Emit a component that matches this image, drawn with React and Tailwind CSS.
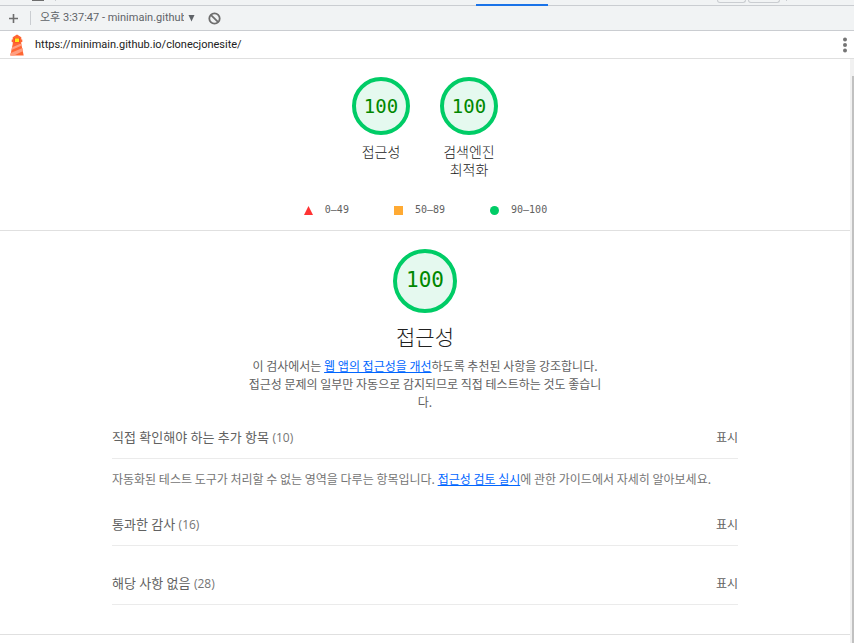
import React from "react";

function Gauge({ score, size, className }) {
  return (
    <div className={`${size} flex items-center justify-center rounded-full border-4 border-[#00cc66] bg-[#e5f9ef] font-['DejaVu_Sans_Mono',monospace] text-[#008800] ${className}`}>
      {score}
    </div>
  );
}

function SummaryGauge({ label }) {
  return (
    <a href="#category" className="flex w-[88px] flex-col items-center gap-2 px-4">
      <Gauge score={100} size="size-[58px] shrink-0" className="text-[19px]" />
      <span className="break-keep text-center text-[14px] font-light leading-[18px] text-[#212121]">{label}</span>
    </a>
  );
}

function Clump({ title, count, children }) {
  return (
    <section>
      <button type="button" className="flex h-[42px] w-full items-center justify-between border-b border-[#ebebeb] text-[#616161]">
        <span className="text-[13px]">
          {title} <span className="text-[12px] text-[#757575]">({count})</span>
        </span>
        <span className="text-[12px]">표시</span>
      </button>
      {children}
    </section>
  );
}

function Lighthouse() {
  return (
    <svg viewBox="0 0 16 22" className="h-[22px] w-4" aria-hidden="true">
      <path d="M8 0.5l4.3 2.8V5.5h1v2.6h-1v2l2.4 11.4H1.3L3.7 10V8.1H2.7V5.5h1V3.3z" fill="#ff6633" />
      <path d="M3.2 13.2l7.6-3.2h1.5l.5 1.5L2.6 16zM1.7 19l11.8-5 .7 3L5 21.5H1.3z" fill="#ff9e80" />
      <path d="M5.2 4h5.6v4.5H5.2z" fill="#f4511e" />
      <path d="M6 4.5h4V8H6z" fill="#ffe81a" />
    </svg>
  );
}

export default function App() {
  return (
    <div className="flex min-h-screen flex-col bg-white font-['Open_Sans','Noto_Sans_CJK_KR',sans-serif]">
      <div className="flex h-1.5 border-b border-[#cacdd1] bg-[#f1f3f4]">
        <div className="flex flex-1 items-start">
          <span className="ml-8 h-px w-3 bg-[#6e6e6e]" />
          <span className="ml-[11px] h-px w-px bg-[#cacdd1]" />
        </div>
        <div className="h-1.5 w-[72px] border-b-2 border-[#1a73e8]" />
        <div className="flex w-[306px] items-start justify-end gap-0.5 pr-[67px]">
          <span className="h-[3px] w-[29px] rounded-b-sm border border-t-0 border-[#cacdd1]" />
          <span className="h-[3px] w-8 rounded-b-sm border border-t-0 border-[#cacdd1]" />
          <span className="ml-1 h-px w-px bg-[#cacdd1]" />
        </div>
      </div>

      <div className="flex h-[25px] items-center border-b border-[#cacdd1] bg-[#f1f3f4] text-[#5f6368]">
        <button type="button" aria-label="새 보고서" className="flex w-[30px] pl-2">
          <svg viewBox="0 0 11 11" className="size-[11px]" fill="none" stroke="#6e6e6e" strokeWidth="1.6">
            <path d="M5.5 1v9M1 5.5h9" />
          </svg>
        </button>
        <span className="h-3.5 w-px bg-[#cacdd1]" />
        <div className="flex items-center gap-1 pl-2">
          <select aria-label="보고서" className="w-[145px] appearance-none overflow-hidden bg-transparent pl-px font-['Roboto','Noto_Sans_CJK_KR',sans-serif] text-[11px] leading-4">
            <option>오후 3:37:47 - minimain.github.io</option>
          </select>
          <svg viewBox="0 0 7 7" className="h-[7px] w-[7px]" fill="#5f6368" aria-hidden="true">
            <path d="M0.5 0h6L3.5 6.5z" />
          </svg>
        </div>
        <button type="button" aria-label="모두 지우기" className="ml-[13px]">
          <svg viewBox="0 0 13 13" className="size-[13px]" fill="none" stroke="#6e6e6e" strokeWidth="1.8">
            <circle cx="6.5" cy="6.5" r="5.2" />
            <path d="M2.8 2.8l7.4 7.4" />
          </svg>
        </button>
      </div>

      <header className="flex h-7 items-center border-b border-[#dfdfdf] pl-[9px] pr-1 text-[#212121]">
        <Lighthouse />
        <a href="https://minimain.github.io/clonecjonesite/" className="ml-2.5 font-['Roboto',sans-serif] text-[11px] leading-4">
          https://minimain.github.io/clonecjonesite/
        </a>
        <button type="button" aria-label="도구 메뉴" className="ml-auto">
          <svg viewBox="0 0 10 16" className="h-4 w-2.5" fill="#757575">
            <circle cx="5" cy="2.5" r="2" />
            <circle cx="5" cy="8" r="2" />
            <circle cx="5" cy="13.5" r="2" />
          </svg>
        </button>
      </header>

      <div className="flex flex-1">
        <main className="min-w-0 flex-1">
          <div className="border-b border-[#e0e0e0] pb-3 pt-[18px]">
            <div className="flex justify-center">
              <SummaryGauge label="접근성" />
              <SummaryGauge label="검색엔진 최적화" />
            </div>
            <div className="mt-[23px] flex items-center justify-center gap-[45px] pl-px font-['DejaVu_Sans_Mono',monospace] text-[10px] leading-4 text-[#616161]">
              <span className="flex items-center gap-3">
                <svg viewBox="0 0 9 9" className="size-[9px]" fill="#ff3333" aria-hidden="true"><path d="M4.5 0L9 9H0z" /></svg>
                0–49
              </span>
              <span className="flex items-center gap-3">
                <i className="size-[9px] bg-[#ffaa33]" />
                50–89
              </span>
              <span className="flex items-center gap-3">
                <i className="size-[9px] rounded-full bg-[#00cc66]" />
                90–100
              </span>
            </div>
          </div>

          <div id="category" className="border-b border-[#e0e0e0] pb-[29px] pt-[18px]">
            <div className="mx-auto w-full max-w-[626px]">
              <div className="flex flex-col items-center text-center">
                <Gauge score={100} size="size-16" className="text-[21px]" />
                <h1 className="mt-2 text-[21px] font-light leading-8 text-[#212121]">접근성</h1>
                <p className="mt-1 max-w-[356px] font-['Noto_Sans_CJK_KR',sans-serif] text-[12px] leading-[18px] text-[#616161]">
                  이 검사에서는 <a href="#improve" className="text-[#0066ff] underline">웹 앱의 접근성을 개선</a>하도록 추천된 사항을 강조합니다. 접근성 문제의 일부만 자동으로 감지되므로 직접 테스트하는 것도 좋습니다.
                </p>
              </div>
              <div className="mt-1.5 flex flex-col gap-[17px]">
                <Clump title="직접 확인해야 하는 추가 항목" count={10}>
                  <p className="pt-3 font-['Noto_Sans_CJK_KR',sans-serif] text-[12px] leading-4 text-[#757575]">
                    자동화된 테스트 도구가 처리할 수 없는 영역을 다루는 항목입니다. <a href="#review" className="text-[#0066ff] underline">접근성 검토 실시</a>에 관한 가이드에서 자세히 알아보세요.
                  </p>
                </Clump>
                <Clump title="통과한 감사" count={16} />
                <Clump title="해당 사항 없음" count={28} />
              </div>
            </div>
          </div>
        </main>
        <div className="flex w-1 flex-col items-end bg-[#f1f1f1] pt-[17px]">
          <span className="w-0.5 flex-1 bg-[#c1c1c1]" />
        </div>
      </div>
    </div>
  );
}
